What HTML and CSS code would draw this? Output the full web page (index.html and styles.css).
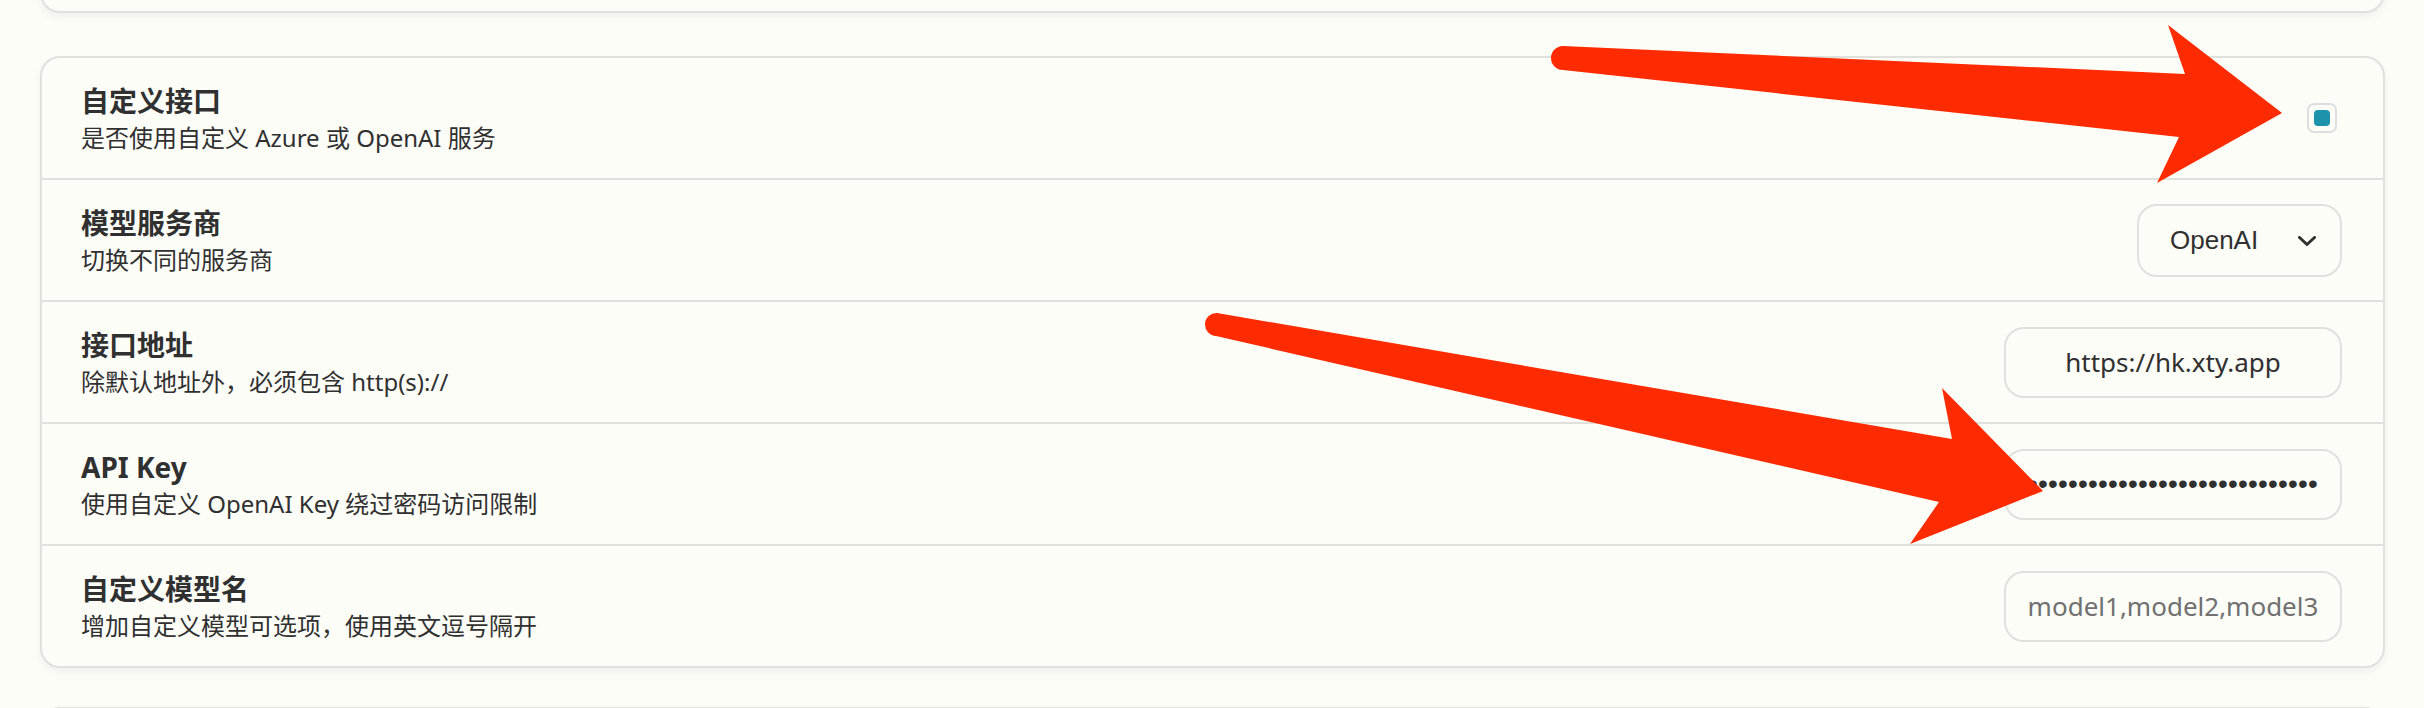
FILE: index.html
```html
<!DOCTYPE html>
<html lang="zh-CN">
<head>
<meta charset="utf-8">
<title>设置</title>
<link rel="stylesheet" href="styles.css">
</head>
<body>
<div class="page">
  <div class="card card-top"></div>
  <div class="card card-main">
    <div class="row">
      <div class="label">
        <div class="title">自定义接口</div>
        <div class="sub">是否使用自定义 Azure 或 OpenAI 服务</div>
      </div>
      <span class="checkbox"><span class="check-fill"></span></span>
    </div>
    <div class="row">
      <div class="label">
        <div class="title">模型服务商</div>
        <div class="sub">切换不同的服务商</div>
      </div>
      <div class="select">
        <span class="select-text">OpenAI</span>
        <svg class="chev" viewBox="0 0 18 10" width="18" height="10"><path d="M1.5 1.5 L9 8.5 L16.5 1.5" fill="none" stroke="#303030" stroke-width="3" stroke-linecap="round" stroke-linejoin="round"/></svg>
      </div>
    </div>
    <div class="row">
      <div class="label">
        <div class="title">接口地址</div>
        <div class="sub">除默认地址外，必须包含 http(s)://</div>
      </div>
      <input class="field" type="text" value="https://hk.xty.app" readonly>
    </div>
    <div class="row">
      <div class="label">
        <div class="title">API Key</div>
        <div class="sub">使用自定义 OpenAI Key 绕过密码访问限制</div>
      </div>
      <div class="field pw"><span class="dots">•••••••••••••••••••••••••••••</span></div>
    </div>
    <div class="row">
      <div class="label">
        <div class="title">自定义模型名</div>
        <div class="sub">增加自定义模型可选项，使用英文逗号隔开</div>
      </div>
      <input class="field" type="text" placeholder="model1,model2,model3" readonly>
    </div>
  </div>
  <div class="card card-bottom"></div>
</div>
<svg class="annot" width="2424" height="708" viewBox="0 0 2424 708">
  <path class="arrow" d="M1563 46 L2185 74 L2168 25 L2282 113 L2157 183 L2179 137 L1563 70 A12 12 0 0 1 1563 46 Z"/>
  <path class="arrow" d="M1217 313 L1952 439 L1942 388 L2043 491 L1910 544 L1939 502 L1216 336 A11.5 11.5 0 0 1 1217 313 Z"/>
</svg>
</body>
</html>
```
FILE: styles.css
```css
html, body {
  margin: 0;
  height: 708px;
  overflow: hidden;
  background: #fdfdf8;
}
body {
  position: relative;
  font-family: "Noto Sans", "Noto Sans CJK SC", sans-serif;
  color: #303030;
}
.page {
  padding: 0 39px 0 40px;
}
.card {
  background: #fdfdf8;
  border: 2px solid #e0e0dc;
  border-radius: 20px;
  box-shadow: 0 4px 8px rgba(0, 0, 0, 0.05);
}
.card-top {
  box-sizing: border-box;
  height: 60px;
  margin-top: -47px;
  margin-bottom: 43px;
}
.card-main {
  margin-bottom: 39px;
  overflow: hidden;
}
.card-bottom {
  height: 100px;
}
.row {
  display: flex;
  align-items: center;
  justify-content: space-between;
  height: 80px;
  padding: 20px 41px 20px 39px;
  border-bottom: 2px solid #e0e0dc;
}
.row:last-child {
  border-bottom: none;
}
.title {
  font-size: 28px;
  font-weight: 700;
  line-height: 40px;
}
.sub {
  font-size: 24px;
  line-height: 34px;
}
.checkbox {
  width: 30px;
  height: 30px;
  box-sizing: border-box;
  border: 2px solid #dedede;
  border-radius: 7px;
  margin-right: 5px;
  display: flex;
  align-items: center;
  justify-content: center;
}
.check-fill {
  width: 16px;
  height: 16px;
  border-radius: 4px;
  background: #1d93ab;
}
.select {
  width: 205px;
  height: 73px;
  box-sizing: border-box;
  border: 2px solid #e0e0dc;
  border-radius: 20px;
  display: flex;
  align-items: center;
  padding: 0 24px 0 31px;
  font-family: "Liberation Sans", Arial, sans-serif;
  font-size: 26px;
}
.chev {
  margin-left: auto;
  margin-top: 2px;
}
.field {
  width: 338px;
  height: 71px;
  box-sizing: border-box;
  border: 2px solid #e0e0dc;
  border-radius: 20px;
  background: transparent;
  padding: 0 16px;
  font-family: "Noto Sans", sans-serif;
  font-size: 26px;
  color: #303030;
  text-align: center;
  outline: none;
}
.field::placeholder {
  color: #707070;
}
.pw {
  display: flex;
  align-items: center;
  justify-content: center;
  overflow: hidden;
  white-space: nowrap;
}
.dots {
  font-family: "Liberation Sans", Arial, sans-serif;
  font-size: 28px;
  letter-spacing: 0.2px;
}
.annot {
  position: absolute;
  top: 0;
  left: 0;
  pointer-events: none;
}
.arrow {
  fill: #ff2b00;
}
```
